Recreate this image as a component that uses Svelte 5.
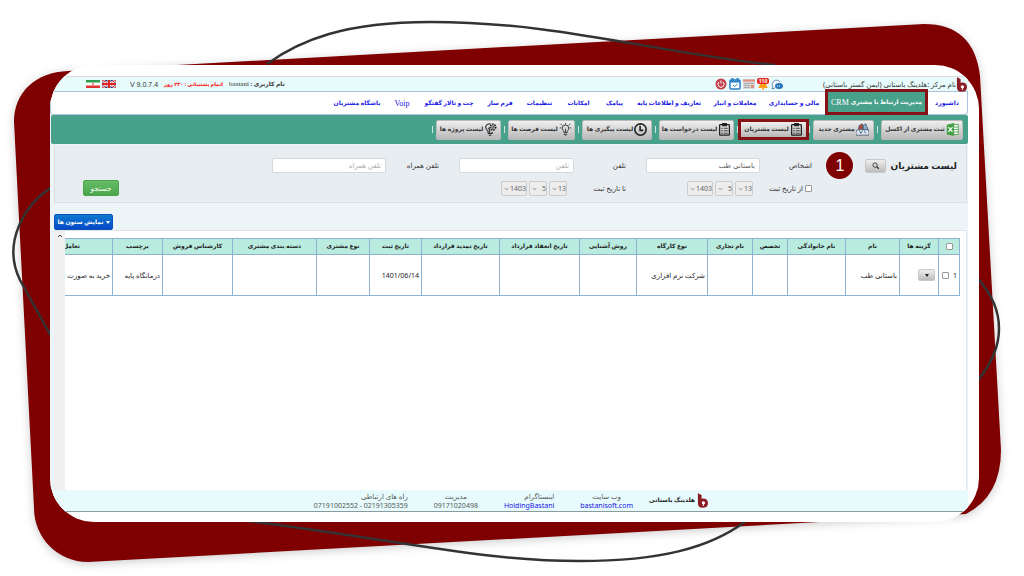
<script lang="ts">
  interface NavItem {
    label: string;
    latin?: string;
    width: number;
    active?: boolean;
  }

  interface Tool {
    label: string;
    icon: string;
    width: number;
    marked?: boolean;
  }

  interface Column {
    label: string;
    width: number;
    value?: string;
  }

  const navItems: NavItem[] = [
    { label: 'داشبورد', width: 22 },
    { label: 'مدیریت ارتباط با مشتری', latin: 'CRM', width: 103, active: true },
    { label: 'مالی و حسابداری', width: 44 },
    { label: 'معاملات و انبار', width: 40 },
    { label: 'تعاریف و اطلاعات پایه', width: 58 },
    { label: 'پیامک', width: 17 },
    { label: 'امکانات', width: 21 },
    { label: 'تنظیمات', width: 23 },
    { label: 'فرم ساز', width: 22 },
    { label: 'چت و تالار گفتگو', width: 46 },
    { label: '', latin: 'Voip', width: 14 },
    { label: 'باشگاه مشتریان', width: 42 },
  ];

  const tools: Tool[] = [
    { label: 'ثبت مشتری از اکسل', icon: 'excel', width: 82 },
    { label: 'مشتری جدید', icon: 'person', width: 61 },
    { label: 'لیست مشتریان', icon: 'list', width: 71, marked: true },
    { label: 'لیست درخواست ها', icon: 'list', width: 75 },
    { label: 'لیست پیگیری ها', icon: 'clock', width: 70 },
    { label: 'لیست فرصت ها', icon: 'bulb', width: 67 },
    { label: 'لیست پروژه ها', icon: 'idea', width: 65 },
  ];

  const columns: Column[] = [
    { label: 'نام', width: 54, value: 'باستانی طب' },
    { label: 'نام خانوادگی', width: 58 },
    { label: 'تخصص', width: 35 },
    { label: 'نام تجاری', width: 45 },
    { label: 'نوع کارگاه', width: 71, value: 'شرکت نرم افزاری' },
    { label: 'روش آشنایی', width: 57 },
    { label: 'تاریخ انعقاد قرارداد', width: 80 },
    { label: 'تاریخ تمدید قرارداد', width: 78 },
    { label: 'تاریخ ثبت', width: 52, value: '1401/06/14' },
    { label: 'نوع مشتری', width: 53 },
    { label: 'دسته بندی مشتری', width: 84 },
    { label: 'کارشناس فروش', width: 70 },
    { label: 'برچسب', width: 50, value: 'درمانگاه پایه' },
    { label: 'تعامل', width: 82, value: 'خرید به صورت اقساطی' },
  ];

  const tableWidth = 60 + columns.reduce((sum, c) => sum + c.width, 0);

  const dateParts = [
    { name: 'روز', value: '13', width: 18 },
    { name: 'ماه', value: '5', width: 18 },
    { name: 'سال', value: '1403', width: 26 },
  ];

  let person = $state('باستانی طب');
  let phone = $state('');
  let mobile = $state('');
</script>

{#snippet logo()}
  <svg class="logo" viewBox="0 0 12 16" aria-hidden="true">
    <path d="M1 0L5 2V6Q12 5 12 11Q12 16 6 16Q1 16 1 11Z" fill="#8c1d24" />
    <circle cx="7" cy="10.500" r="1.800" fill="#fff" />
    <path d="M7 11v3" stroke="#fff" />
  </svg>
{/snippet}

{#snippet toolIcon(name: string)}
  <svg class="tool-icon" viewBox="0 0 16 16" fill="none" stroke="#222" aria-hidden="true">
    {#if name === 'excel'}
      <rect x="8" y="2" width="7" height="12" fill="#fff" stroke="#43a047" />
      <path d="M10 5h5M10 8h5M10 11h5" stroke="#43a047" />
      <path d="M1 2l9-2v16l-9-2z" fill="#43a047" stroke="none" />
      <path d="M3 5l5 6M8 5l-5 6" stroke="#fff" stroke-width="1.500" />
    {:else if name === 'person'}
      <path d="M3 8l1-5 4-2 1 7z" fill="#b8483f" stroke="#456" />
      <path d="M9 3l3-2 1 3 2 4H9z" fill="#8fb0cf" stroke="#34597d" />
      <path d="M0 15v-4q0-3 4-3h8q4 0 4 3v4z" fill="#dfe8f2" stroke="#456" />
      <path d="M4 9l2 4 2-4M10 9l2 4" stroke="#34597d" />
    {:else if name === 'list'}
      <rect x="2" y="2" width="12" height="13" rx="1" stroke-width="1.600" />
      <rect x="5" y="0" width="6" height="4" fill="#222" stroke="none" />
      <path d="M4 6.500h2M7 6.500h5M4 9.500h2M7 9.500h5M4 12.500h2M7 12.500h5" />
    {:else if name === 'clock'}
      <circle cx="8" cy="8" r="7" stroke-width="2" />
      <path d="M7.500 3.500v5.500h4" stroke-width="2" />
    {:else if name === 'bulb'}
      <path d="M6 12v-2q-2-1-2-3.500a4 4 0 0 1 8 0q0 2.500-2 3.500v2zM6 14h4M7 16h2M8 12V7" />
      <path d="M8 0v2M1 6h2M13 6h2M2 1l2 2M14 1l-2 2" />
    {:else}
      <path d="M5 13v-3q-3-2-3-5a5 5 0 0 1 6-4M5 13h5v-2M6 15h3M7 12V8L5 6" stroke-width="1.300" />
      <circle cx="11" cy="5" r="3.500" stroke-width="2" stroke-dasharray="2 1" />
      <circle cx="11" cy="5" r="1.500" />
    {/if}
  </svg>
{/snippet}

{#snippet datePicker(group: string)}
  <div class="date">
    {#each dateParts as part (part.name)}
      <span class="date-part" style="width: {part.width}px">
        <select aria-label="{group} {part.name}" disabled>
          <option>{part.value}</option>
        </select>
        <svg viewBox="0 0 6 4" aria-hidden="true">
          <path d="M1 1l2 2 2-2" fill="none" stroke="#777" />
        </svg>
      </span>
    {/each}
  </div>
{/snippet}

<div class="stage" dir="rtl">
  <svg class="backdrop" viewBox="0 0 1024 576" preserveAspectRatio="none" aria-hidden="true">
    <path
      class="sheet"
      d="M14 122C14 92 36 72 68 71L924 24Q974 24 980 76L1001 450Q1001 496 966 514L88 562C58 562 34 538 34 508Z"
    />
    <g fill="none" stroke="#333" stroke-width="2.500">
      <path d="M267 64C300 40 345 22 430 22C560 22 650 52 775 65" />
      <path d="M52 187C24 205 2 243 20 280L52 338" />
      <path d="M978 279C1006 310 1006 346 978 380" />
      <path d="M240 520C400 540 480 561 580 561C660 561 710 548 746 521" />
    </g>
  </svg>

  <main class="card">
    <div class="page">
      <header class="topbar">
        <span class="center-name">نام مرکز :هلدینگ باستانی (ایمن گستر باستانی)</span>
        {@render logo()}
        <div class="status-icons">
          <svg viewBox="0 0 12 12" role="img" aria-label="گفتگو">
            <path d="M9 4A4 4 0 1 0 2 9l-1 2 3-1" fill="#fff" stroke="#5b87b5" />
            <ellipse cx="8" cy="8" rx="4" ry="3" fill="#2874b8" />
            <path d="M6 8h4" stroke="#fff" stroke-dasharray="1" />
          </svg>
          <span class="bell">
            <svg viewBox="0 0 12 12" aria-hidden="true">
              <path d="M1 10q2-2 2-6h6q0 4 2 6z" fill="#f9a11b" />
              <circle cx="6" cy="11" r="1" fill="#f9a11b" />
            </svg>
            <b>110</b>
          </span>
          <svg viewBox="0 0 12 12" role="img" aria-label="اخبار">
            <rect y="1" width="12" height="10" fill="#d9d9d9" />
            <path d="M0 2.500h12" stroke="#e08b7d" stroke-width="2" />
            <path d="M1 5.500h10M1 7.500h6M1 9.500h6" stroke="#aaa" />
            <rect x="8" y="7" width="3" height="3" fill="#e08b7d" />
          </svg>
          <svg viewBox="0 0 12 12" role="img" aria-label="تقویم">
            <rect x="1" y="2" width="10" height="9" rx="1" fill="#fff" stroke="#2b7fc3" stroke-width="1.500" />
            <path d="M1 3.500h10M3.500 0v3M8.500 0v3" stroke="#2b7fc3" stroke-width="2" />
            <path d="M4 7l1.500 1.500L8.500 6" fill="none" stroke="#2b7fc3" />
          </svg>
          <svg viewBox="0 0 12 12" role="img" aria-label="خروج">
            <circle cx="6" cy="6" r="5.500" fill="#c5404a" />
            <path d="M4 4a3 3 0 1 0 4 0M6 2.500v3" fill="none" stroke="#fff" />
          </svg>
        </div>
        <div class="account">
          <span class="user"><b>نام کاربری :</b> <i>bastani</i></span>
          <span class="support">اتمام پشتیبانی : ۲۳۰ روز</span>
          <span class="version" dir="ltr">V 9.0.7.4</span>
          <span class="flags">
            <svg viewBox="0 0 14 8" role="img" aria-label="English">
              <rect width="14" height="8" fill="#26336b" />
              <path d="M0 0l14 8M14 0L0 8" stroke="#fff" stroke-width="2" />
              <path d="M0 0l14 8M14 0L0 8" stroke="#d22" />
              <path d="M7 0v8M0 4h14" stroke="#fff" stroke-width="3" />
              <path d="M7 0v8M0 4h14" stroke="#d22" stroke-width="2" />
            </svg>
            <svg viewBox="0 0 14 8" role="img" aria-label="فارسی">
              <rect width="14" height="8" fill="#fff" />
              <rect width="14" height="2.500" fill="#2f9e4f" />
              <rect y="5.500" width="14" height="2.500" fill="#e03131" />
              <circle cx="7" cy="4" r="1" fill="#e06060" />
            </svg>
          </span>
        </div>
      </header>

      <nav class="menu">
        {#each navItems as item (item.label)}
          <a href="#menu" class:active={item.active} style="width: {item.width}px">
            {item.label}
            {#if item.latin}<span class="latin">{item.latin}</span>{/if}
          </a>
        {/each}
      </nav>

      <div class="toolbar">
        {#each tools as tool (tool.label)}
          <button type="button" class:marked={tool.marked} style="width: {tool.width}px">
            {@render toolIcon(tool.icon)}{tool.label}
          </button>
          <span class="divider"></span>
        {/each}
      </div>

      <form class="filters" onsubmit={(e) => e.preventDefault()}>
        <div class="heading">
          <h1>لیست مشتریان</h1>
          <button type="button" class="lookup" aria-label="جستجو در لیست">
            <svg viewBox="0 0 8 8" fill="none" stroke="#333" aria-hidden="true">
              <circle cx="3.500" cy="3.500" r="2.500" />
              <path d="M5.500 5.500L8 8" stroke-width="1.500" />
            </svg>
          </button>
          <span class="step">1</span>
        </div>
        <div class="fields">
          <label for="person">اشخاص</label>
          <input id="person" type="text" bind:value={person} />
          <label class="next" for="phone">تلفن</label>
          <input id="phone" type="text" placeholder="تلفن" bind:value={phone} />
          <label class="next" for="mobile">تلفن همراه</label>
          <input id="mobile" type="text" placeholder="تلفن همراه" bind:value={mobile} />
          <label class="check"><input type="checkbox" />از تاریخ ثبت</label>
          {@render datePicker('از تاریخ')}
          <span class="next">تا تاریخ ثبت</span>
          {@render datePicker('تا تاریخ')}
        </div>
        <button type="submit" class="search">جستجو</button>
      </form>

      <div class="column-bar">
        <button type="button" class="columns-button">
          <svg viewBox="0 0 4 3" aria-hidden="true"><path d="M0 0h4L2 3z" fill="#fff" /></svg>
          نمایش ستون ها
        </button>
      </div>

      <section class="results">
        <div class="table-clip">
          <table style="width: {tableWidth}px">
            <colgroup>
              <col style="width: 21px" />
              <col style="width: 39px" />
              {#each columns as column (column.label)}
                <col style="width: {column.width}px" />
              {/each}
            </colgroup>
            <thead>
              <tr>
                <th><input type="checkbox" aria-label="انتخاب همه" /></th>
                <th>گزینه ها</th>
                {#each columns as column (column.label)}
                  <th>{column.label}</th>
                {/each}
              </tr>
            </thead>
            <tbody>
              <tr>
                <td class="pick">
                  <label>1 <input type="checkbox" /></label>
                </td>
                <td>
                  <button type="button" class="options" aria-label="گزینه ها">
                    <svg viewBox="0 0 4 3" aria-hidden="true"><path d="M0 0h4L2 3z" fill="#222" /></svg>
                  </button>
                </td>
                {#each columns as column (column.label)}
                  <td>{column.value ?? ''}</td>
                {/each}
              </tr>
            </tbody>
          </table>
        </div>
        <div class="scrollbar">
          <svg viewBox="0 0 6 4" aria-hidden="true">
            <path d="M1 3l2-2 2 2" fill="none" stroke="#444" />
          </svg>
        </div>
      </section>

      <footer>
        <div class="brand">{@render logo()}<b>هلدینگ باستانی</b></div>
        <div class="contact centered">وب سایت<a href="#site">bastanisoft.com</a></div>
        <div class="contact">اینستاگرام<a href="#instagram">HoldingBastani</a></div>
        <div class="contact centered">مدیریت<span>09171020498</span></div>
        <div class="contact">راه های ارتباطی<span dir="ltr">07191002552 - 02191305359</span></div>
      </footer>
    </div>
  </main>
</div>

<style>
  :global(body) {
    margin: 0;
    background: #fff;
  }

  .stage {
    position: relative;
    display: flex;
    box-sizing: border-box;
    min-height: 100vh;
    padding: 65px 45px 54px 50px;
    color: #333;
    font: 7px/9px 'Noto Sans', 'DejaVu Sans', sans-serif;
  }

  .backdrop {
    position: absolute;
    inset: 0;
    width: 100%;
    height: 100%;
  }

  .sheet {
    fill: #7f0000;
    filter: drop-shadow(0 2px 5px #0003);
  }

  button,
  input,
  select {
    box-sizing: border-box;
    margin: 0;
    padding: 0;
    color: inherit;
    font: inherit;
  }

  a {
    color: #1414e6;
    text-decoration: none;
  }

  input[type='checkbox'] {
    appearance: none;
    width: 7px;
    height: 7px;
    border: 1px solid #999;
    border-radius: 1px;
    background: #fff;
  }

  .card {
    position: relative;
    display: flex;
    flex: 1;
    min-width: 0;
    overflow: hidden;
    border-radius: 44px;
    background: #fff;
  }

  .page {
    display: flex;
    flex: 1;
    flex-direction: column;
    min-width: 0;
    margin: 11px 11px 10px 0;
    background: #ecf4f8;
  }

  .topbar {
    display: flex;
    box-sizing: border-box;
    align-items: center;
    height: 16px;
    border-top: 1px solid #dcdcdc;
    border-bottom: 1px solid #a9c4dc;
    background: #e7fbfc;
    padding: 0 1px 0 36px;
  }

  .logo {
    flex: none;
    width: 11px;
    height: 15px;
  }

  .topbar .logo {
    order: -1;
  }

  .center-name {
    white-space: nowrap;
  }

  .status-icons {
    display: flex;
    gap: 2px;
    margin-right: 40px;
  }

  .status-icons svg {
    display: block;
    width: 12px;
    height: 12px;
  }

  .bell {
    position: relative;
  }

  .bell b {
    position: absolute;
    top: 0;
    right: 0;
    left: 0;
    border-radius: 2px;
    background: #e5231b;
    color: #fff;
    font-size: 5px;
    line-height: 6px;
    text-align: center;
  }

  .account {
    display: flex;
    align-items: center;
    gap: 6px;
    margin-right: auto;
    white-space: nowrap;
  }

  .user {
    font-size: 6px;
  }

  .user i {
    font: 7px/9px 'Liberation Serif', serif;
  }

  .support {
    color: #f00;
    font-size: 5px;
    font-weight: bold;
  }

  .version {
    font: 7px/9px 'Liberation Sans', sans-serif;
  }

  .flags {
    display: flex;
    gap: 2px;
    margin-right: 8px;
  }

  .flags svg {
    width: 14px;
    height: 8px;
  }

  .menu {
    display: flex;
    align-items: center;
    gap: 17px;
    height: 22px;
    padding: 0 9px;
    border: 1px solid #a9c4dc;
    border-top: 0;
    border-radius: 0 0 4px 4px;
    background: #fff;
  }

  .menu a {
    display: flex;
    flex: none;
    justify-content: center;
    gap: 2px;
    font-size: 6px;
    font-weight: bold;
    white-space: nowrap;
  }

  .menu a.active {
    box-sizing: border-box;
    align-items: center;
    align-self: stretch;
    margin: -3px -9px -1px -8px;
    border: 3px solid #861216;
    background: #48a18b;
    color: #fff;
    z-index: 1;
  }

  .latin {
    font: 8px/9px 'Liberation Serif', serif;
  }

  .toolbar {
    display: flex;
    align-items: center;
    gap: 3px;
    height: 29px;
    margin: 0 0 1px 1px;
    padding: 0 5px;
    border-radius: 2px;
    background: #48a18b;
  }

  .toolbar button {
    display: flex;
    flex: none;
    align-items: center;
    justify-content: center;
    gap: 1px;
    height: 20px;
    border: 1px solid #bbb;
    border-radius: 2px;
    background: linear-gradient(#efefef, #b8b8b8);
    font-size: 6px;
    font-weight: bold;
    white-space: nowrap;
  }

  .toolbar button.marked {
    height: 21px;
    margin: 0 -3px;
    border: 3px solid #861216;
    border-radius: 0;
  }

  .tool-icon {
    flex: none;
    width: 13px;
    height: 13px;
  }

  .divider {
    width: 1px;
    height: 7px;
    background: #cfe6df;
  }

  .filters {
    display: flex;
    align-items: flex-start;
    height: 58px;
    box-sizing: border-box;
    margin: 0 1px 0 4px;
    padding: 13px 9px 0 0;
    border: 1px solid #d8dfe3;
    border-top: 0;
    background: #e8edf1;
  }

  .heading {
    display: flex;
    flex: none;
    align-items: center;
    gap: 4px;
    width: 145px;
    height: 15px;
  }

  h1 {
    margin: 0;
    color: #222;
    font-size: 9px;
    line-height: 15px;
    white-space: nowrap;
  }

  .lookup,
  .options {
    display: inline-flex;
    align-items: center;
    justify-content: center;
    border: 1px solid #c8c8c8;
    border-radius: 2px;
    background: linear-gradient(#eee, #bcbcbc);
  }

  .lookup {
    width: 21px;
    height: 14px;
  }

  .lookup svg {
    width: 7px;
    height: 7px;
  }

  .step {
    flex: none;
    width: 27px;
    height: 27px;
    margin-right: 8px;
    border-radius: 50%;
    background: #7f0000;
    color: #fff;
    font: 16px/27px 'Liberation Sans', sans-serif;
    text-align: center;
  }

  .fields {
    display: grid;
    grid-template-columns: 52px 114px 72px 115px 73px 114px;
    grid-auto-rows: 15px;
    align-items: center;
    row-gap: 8px;
  }

  .next {
    padding-right: 20px;
  }

  .fields input[type='text'] {
    width: 100%;
    height: 15px;
    padding: 0 4px;
    border: 1px solid #d5d9dc;
    border-radius: 2px;
    background: #fff;
    color: #555;
  }

  .fields input::placeholder {
    color: #aaa;
  }

  .check {
    display: flex;
    align-items: center;
    gap: 2px;
    white-space: nowrap;
  }

  .date {
    display: flex;
    gap: 2px;
    padding-right: 7px;
  }

  .date-part {
    position: relative;
  }

  .date-part select {
    display: block;
    appearance: none;
    width: 100%;
    height: 15px;
    border: 1px solid #ccc;
    border-radius: 2px;
    background: #ededed;
    color: #666;
    opacity: 1;
  }

  .date-part svg {
    position: absolute;
    top: 6px;
    left: 3px;
    width: 5px;
    height: 4px;
  }

  .search {
    width: 36px;
    height: 16px;
    margin: 22px auto 0 28px;
    border: 1px solid #4da34d;
    border-radius: 2px;
    background: linear-gradient(#65bd65, #4aa54a);
    color: #fff;
  }

  .column-bar {
    display: flex;
    justify-content: flex-end;
    align-items: flex-end;
    height: 27px;
    margin-left: 4px;
  }

  .columns-button {
    display: flex;
    align-items: center;
    justify-content: center;
    gap: 2px;
    width: 59px;
    height: 16px;
    border: 1px solid #0a50b8;
    border-radius: 2px;
    background: linear-gradient(#0c7ad0, #0648c8);
    color: #fff;
    font-size: 6px;
    font-weight: bold;
    white-space: nowrap;
  }

  .columns-button svg,
  .options svg {
    width: 4px;
    height: 3px;
  }

  .results {
    display: flex;
    flex: 1;
    min-height: 0;
    margin: 0 1px 0 4px;
    border-top: 1px solid #dfe3e6;
    border-right: 1px solid #e3eaf0;
    background: #fff;
  }

  .table-clip {
    flex: 1;
    min-width: 0;
    overflow: hidden;
    margin: 7px 6px 0 0;
  }

  .scrollbar {
    width: 11px;
    background: #f0f0f0;
    text-align: center;
  }

  .scrollbar svg {
    width: 6px;
    height: 4px;
  }

  table {
    table-layout: fixed;
    border-collapse: collapse;
    color: #222;
  }

  th,
  td {
    box-sizing: border-box;
    padding: 0 2px;
    border: 1px solid #8fb2d3;
    white-space: nowrap;
    overflow: hidden;
  }

  th {
    height: 16px;
    padding: 0;
    background: #b9ebdf;
    font-size: 6px;
    text-align: center;
  }

  td {
    height: 41px;
  }

  th input,
  td input {
    vertical-align: middle;
  }

  .pick label {
    display: flex;
    align-items: center;
    gap: 4px;
  }

  .options {
    width: 17px;
    height: 12px;
    margin-right: 1px;
  }

  footer {
    display: flex;
    align-items: center;
    gap: 26px;
    height: 21px;
    padding-right: 260px;
    border-bottom: 1px solid #8a9a9e;
    background: #e7fbfc;
    color: #555;
  }

  .brand {
    display: flex;
    align-items: center;
    gap: 2px;
    width: 64px;
    margin-left: -15px;
    color: #222;
    white-space: nowrap;
    font-size: 6px;
  }

  .contact {
    display: flex;
    flex-direction: column;
    white-space: nowrap;
  }

  .centered {
    align-items: center;
  }
</style>
